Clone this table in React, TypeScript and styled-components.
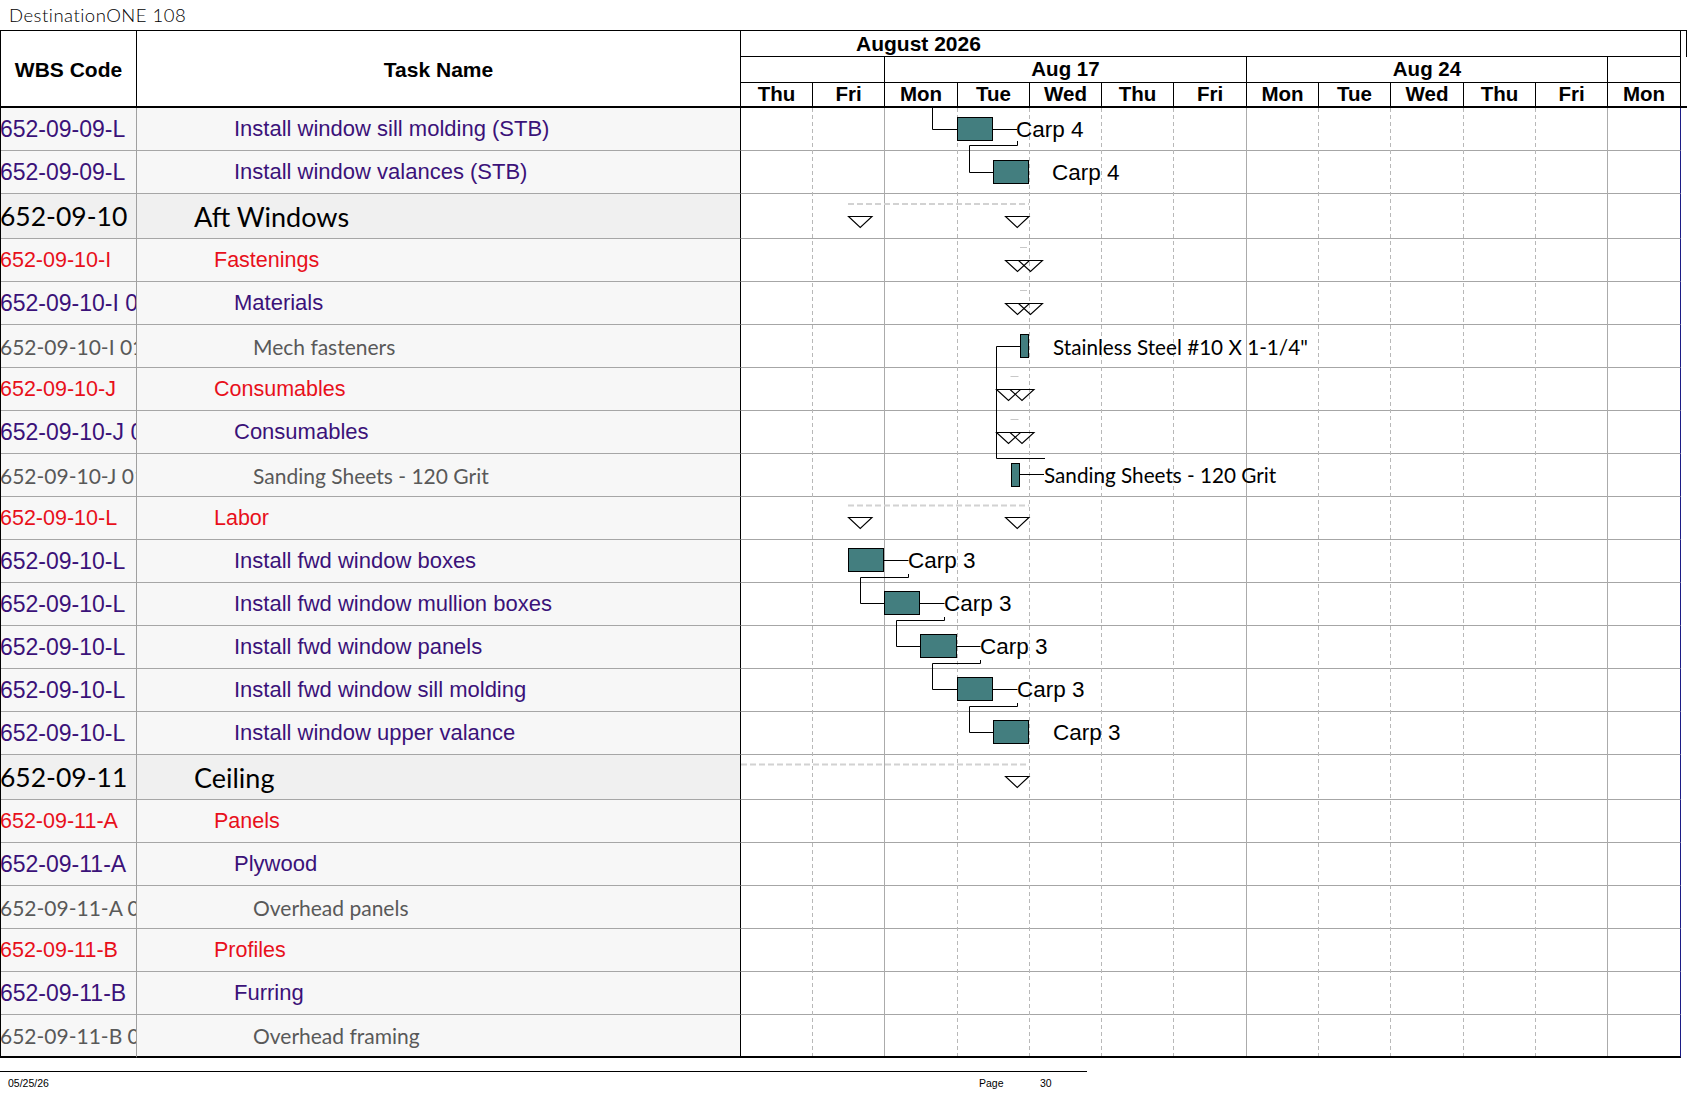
import React from 'react';
import styled, { createGlobalStyle, css } from 'styled-components';

const GlobalStyle = createGlobalStyle`
  *, *::before, *::after { box-sizing: border-box; }
  html, body { margin: 0; padding: 0; background: #fff; }
  body { font-family: 'Liberation Sans', Arial, sans-serif; }
`;

type Level = 1 | 2 | 3 | 4;
type Row = { wbs: string; name: string; level: Level };

const COLS = '136px 604px 940px 6px';
const DAY_WIDTHS = [72, 72, 73, 72, 72, 72, 73, 72, 72, 73, 72, 72, 73];
const DAYS = ['Thu', 'Fri', 'Mon', 'Tue', 'Wed', 'Thu', 'Fri', 'Mon', 'Tue', 'Wed', 'Thu', 'Fri', 'Mon'];
const WEEKS = [
  { label: '', span: 2 },
  { label: 'Aug 17', span: 5 },
  { label: 'Aug 24', span: 5 },
  { label: '', span: 1 },
];

const ROWS: Row[] = [
  { wbs: '652-09-09-L', name: 'Install window sill molding (STB)', level: 3 },
  { wbs: '652-09-09-L', name: 'Install window valances (STB)', level: 3 },
  { wbs: '652-09-10', name: 'Aft Windows', level: 1 },
  { wbs: '652-09-10-I', name: 'Fastenings', level: 2 },
  { wbs: '652-09-10-I 01', name: 'Materials', level: 3 },
  { wbs: '652-09-10-I 01 01', name: 'Mech fasteners', level: 4 },
  { wbs: '652-09-10-J', name: 'Consumables', level: 2 },
  { wbs: '652-09-10-J 01', name: 'Consumables', level: 3 },
  { wbs: '652-09-10-J 01 01', name: 'Sanding Sheets - 120 Grit', level: 4 },
  { wbs: '652-09-10-L', name: 'Labor', level: 2 },
  { wbs: '652-09-10-L', name: 'Install fwd window boxes', level: 3 },
  { wbs: '652-09-10-L', name: 'Install fwd window mullion boxes', level: 3 },
  { wbs: '652-09-10-L', name: 'Install fwd window panels', level: 3 },
  { wbs: '652-09-10-L', name: 'Install fwd window sill molding', level: 3 },
  { wbs: '652-09-10-L', name: 'Install window upper valance', level: 3 },
  { wbs: '652-09-11', name: 'Ceiling', level: 1 },
  { wbs: '652-09-11-A', name: 'Panels', level: 2 },
  { wbs: '652-09-11-A', name: 'Plywood', level: 3 },
  { wbs: '652-09-11-A 01', name: 'Overhead panels', level: 4 },
  { wbs: '652-09-11-B', name: 'Profiles', level: 2 },
  { wbs: '652-09-11-B', name: 'Furring', level: 3 },
  { wbs: '652-09-11-B 01', name: 'Overhead framing', level: 4 },
];

const levelFont: Record<Level, ReturnType<typeof css>> = {
  1: css`font-family: Lato, 'Liberation Sans', sans-serif; font-size: 27px; color: #000;`,
  2: css`font-family: 'Liberation Sans', Arial, sans-serif; font-size: 21.5px; color: #e8101b;`,
  3: css`font-family: 'Liberation Sans', Arial, sans-serif; font-size: 22px; color: #3b1279;`,
  4: css`font-family: Lato, 'Liberation Sans', sans-serif; font-size: 21px; color: #595959;`,
};
const INDENT: Record<Level, number> = { 1: 57, 2: 77, 3: 97, 4: 116 };

const Page = styled.div`
  width: 1687px;
`;

const Title = styled.div`
  height: 30px;
  padding-left: 9px;
  display: flex;
  align-items: center;
  font-family: Lato, 'Liberation Sans', sans-serif;
  font-weight: 300;
  font-size: 18.5px;
  letter-spacing: 0.5px;
  color: #000;
`;

const Sheet = styled.div`
  width: 1687px;
  border-top: 1px solid #000;
  border-left: 1px solid #000;
`;

const Header = styled.div`
  display: grid;
  grid-template-columns: ${COLS};
  height: 77px;
  border-bottom: 2px solid #000;
`;

const HeadCell = styled.div`
  display: flex;
  align-items: center;
  justify-content: center;
  padding-top: 3px;
  border-right: 1px solid #000;
  font-weight: bold;
  font-size: 21px;
  color: #000;
`;

const ChartHead = styled.div`
  display: grid;
  grid-template-rows: 26px 26px 23px;
`;

const MonthCell = styled.div`
  display: flex;
  align-items: center;
  padding-left: 115px;
  border-bottom: 1px solid #000;
  border-right: 1px solid #000;
  font-weight: bold;
  font-size: 21px;
`;

const ScaleRow = styled.div<{ $line?: boolean }>`
  display: grid;
  grid-template-columns: ${DAY_WIDTHS.map(w => `${w}px`).join(' ')};
  ${p => p.$line && 'border-bottom: 1px solid #000;'}
`;

const ScaleCell = styled.div<{ $span: number }>`
  grid-column: span ${p => p.$span};
  display: flex;
  align-items: center;
  justify-content: center;
  border-right: 1px solid #000;
  font-weight: bold;
  font-size: 20.5px;
  line-height: 1;
`;

const FillerHead = styled.div`
  display: flex;
  flex-direction: column;
  &::before {
    content: '';
    height: 26px;
    border-right: 1px solid #000;
  }
`;

const Body = styled.div`
  position: relative;
`;

const TableRow = styled.div<{ $h: number }>`
  display: grid;
  grid-template-columns: ${COLS};
  height: ${p => p.$h}px;
`;

const rowLine = css<{ $last?: boolean }>`
  border-bottom: ${p => (p.$last ? '2px solid #000' : '1px solid #a6a6a6')};
`;

const WbsCell = styled.div<{ $level: Level; $last?: boolean }>`
  display: flex;
  align-items: center;
  overflow: hidden;
  white-space: nowrap;
  border-right: 1px solid #a0a0a0;
  background: ${p => (p.$level === 1 ? '#f0f0f0' : '#f7f7f7')};
  ${p => levelFont[p.$level]}
  ${p => p.$level === 3 && 'font-size: 23px;'}
  ${p => p.$level === 1 && 'font-size: 26.5px;'}
  ${rowLine}
  span { margin-left: -1px; }
`;

const TaskCell = styled.div<{ $level: Level; $last?: boolean }>`
  display: flex;
  align-items: center;
  overflow: hidden;
  white-space: nowrap;
  padding-left: ${p => INDENT[p.$level]}px;
  border-right: 1px solid #000;
  background: ${p => (p.$level === 1 ? '#f0f0f0' : '#f7f7f7')};
  ${p => levelFont[p.$level]}
  ${rowLine}
`;

const ChartCell = styled.div<{ $last?: boolean }>`
  background: #fff;
  border-right: 1px solid #1c1c86;
  ${rowLine}
`;

const Drawing = styled.svg`
  position: absolute;
  top: 0;
  left: 740px;
  width: 940px;
  height: 950px;
  pointer-events: none;
`;

const Bar = styled.rect`
  fill: #437e7f;
  stroke: #000;
  stroke-width: 1;
`;

const Link = styled.path`
  fill: none;
  stroke: #000;
  stroke-width: 1;
`;

const Milestone = styled.polygon`
  fill: none;
  stroke: #000;
  stroke-width: 1.1;
`;

const SummaryLine = styled.line`
  stroke: #d2d2d2;
  stroke-width: 2;
  stroke-dasharray: 6 3;
`;

const Tick = styled.line`
  stroke: #c8c8c8;
  stroke-width: 1;
`;

const GridLine = styled.line<{ $solid: boolean }>`
  stroke: ${p => (p.$solid ? '#ababab' : '#b8b8b8')};
  stroke-width: 1;
  stroke-dasharray: ${p => (p.$solid ? 'none' : '4 3')};
`;

const ResLabel = styled.text`
  font-family: 'Liberation Sans', Arial, sans-serif;
  font-size: 22.5px;
  fill: #000;
`;

const NoteLabel = styled.text`
  font-family: Lato, 'Liberation Sans', sans-serif;
  font-size: 20.7px;
  fill: #000;
`;

const FooterRule = styled.div`
  width: 1087px;
  margin-top: 13px;
  border-top: 1px solid #000;
`;

const FooterRow = styled.div`
  display: grid;
  grid-template-columns: 971px 61px auto;
  padding: 5px 0 0 8px;
  font-family: 'Liberation Sans', Arial, sans-serif;
  font-size: 10.5px;
  line-height: 13px;
  color: #000;
`;

const BARS = [
  { x: 957.5, y: 117.5, w: 35 },
  { x: 993.5, y: 160.5, w: 35 },
  { x: 1020.5, y: 334.5, w: 8 },
  { x: 1011.5, y: 463.5, w: 8 },
  { x: 848.5, y: 548.5, w: 35 },
  { x: 884.5, y: 591.5, w: 35 },
  { x: 920.5, y: 634.5, w: 36 },
  { x: 957.5, y: 677.5, w: 35 },
  { x: 993.5, y: 720.5, w: 35 },
];

const LINKS = [
  'M932.5 108 V129.5 H957.5',
  'M992.5 129.5 H1017',
  'M1017.5 141 V145.5 H969.5 V172.5 H993.5',
  'M996.5 346.5 H1020.5',
  'M996.5 346.5 V458.5 H1045',
  'M1019.5 474.5 H1044',
  'M883.5 560.5 H908.5',
  'M908.5 574 V577.5 H860.5 V603.5 H884.5',
  'M919.5 603.5 H944.5',
  'M944.5 617 V620.5 H896.5 V646.5 H920.5',
  'M956.5 646.5 H980.5',
  'M980.5 660 V663.5 H932.5 V689.5 H957.5',
  'M992.5 689.5 H1017.5',
  'M1017.5 703 V706.5 H969.5 V732.5 H993.5',
];

const RES_LABELS = [
  { x: 1016, y: 129.5, t: 'Carp 4' },
  { x: 1052, y: 172, t: 'Carp 4' },
  { x: 908, y: 560.5, t: 'Carp 3' },
  { x: 944, y: 603.5, t: 'Carp 3' },
  { x: 980, y: 646.5, t: 'Carp 3' },
  { x: 1017, y: 689.5, t: 'Carp 3' },
  { x: 1053, y: 732, t: 'Carp 3' },
];

const NOTE_LABELS = [
  { x: 1053, y: 346.5, t: 'Stainless Steel #10 X 1-1/4"' },
  { x: 1044, y: 474.5, t: 'Sanding Sheets - 120 Grit' },
];

const SUMMARIES = [
  { x1: 848, x2: 1029, y: 204 },
  { x1: 848, x2: 1029, y: 505.5 },
  { x1: 741, x2: 1029, y: 764.5 },
];

// [left, right, top, apex]
const MILESTONES: [number, number, number, number][] = [
  [848.5, 872, 216.5, 227.5],
  [1005.5, 1029, 216.5, 227.5],
  [1005.5, 1029.5, 260.5, 271.5],
  [1018.5, 1042.5, 260.5, 271.5],
  [1005.5, 1029.5, 303.5, 314.5],
  [1018.5, 1042.5, 303.5, 314.5],
  [996.5, 1020.5, 389.5, 400.5],
  [1010, 1034, 389.5, 400.5],
  [996.5, 1020.5, 432.5, 443.5],
  [1010, 1034, 432.5, 443.5],
  [848.5, 872, 517.5, 528.5],
  [1005.5, 1029, 517.5, 528.5],
  [1005.5, 1029, 776.5, 787.5],
];

const TICKS = [
  [1020, 1027, 247.5],
  [1020, 1027, 290.5],
  [1010.5, 1018.5, 376.5],
  [1010.5, 1018.5, 419.5],
];

const gridLines = () => {
  const out: { x: number; solid: boolean }[] = [];
  let edge = 741;
  DAY_WIDTHS.slice(0, -1).forEach((w, i) => {
    edge += w;
    out.push({ x: edge - 0.5, solid: DAYS[i + 1] === 'Mon' });
  });
  return out;
};

const GanttDrawing = () => (
  <Drawing viewBox='741 108 940 950'>
    {gridLines().map(g => (
      <GridLine key={g.x} $solid={g.solid} x1={g.x} x2={g.x} y1={108} y2={1056} />
    ))}
    {SUMMARIES.map(s => (
      <SummaryLine key={s.y} x1={s.x1} x2={s.x2} y1={s.y} y2={s.y} />
    ))}
    {TICKS.map(([x1, x2, y]) => (
      <Tick key={y} x1={x1} x2={x2} y1={y} y2={y} />
    ))}
    {MILESTONES.map(([l, r, t, a], i) => (
      <Milestone key={i} points={`${l},${t} ${r},${t} ${(l + r) / 2},${a}`} />
    ))}
    {LINKS.map(d => (
      <Link key={d} d={d} />
    ))}
    {BARS.map(b => (
      <Bar key={`${b.x}-${b.y}`} x={b.x} y={b.y} width={b.w} height={23} />
    ))}
    {RES_LABELS.map(l => (
      <ResLabel key={`${l.x}-${l.y}`} x={l.x} y={l.y} dominantBaseline='central'>
        {l.t}
      </ResLabel>
    ))}
    {NOTE_LABELS.map(l => (
      <NoteLabel key={l.t} x={l.x} y={l.y} dominantBaseline='central'>
        {l.t}
      </NoteLabel>
    ))}
  </Drawing>
);

export default function App() {
  return (
    <Page>
      <GlobalStyle />
      <Title>DestinationONE 108</Title>
      <Sheet>
        <Header>
          <HeadCell>WBS Code</HeadCell>
          <HeadCell>Task Name</HeadCell>
          <ChartHead>
            <MonthCell>August 2026</MonthCell>
            <ScaleRow $line>
              {WEEKS.map((w, i) => (
                <ScaleCell key={i} $span={w.span}>
                  {w.label}
                </ScaleCell>
              ))}
            </ScaleRow>
            <ScaleRow>
              {DAYS.map((d, i) => (
                <ScaleCell key={i} $span={1}>
                  {d}
                </ScaleCell>
              ))}
            </ScaleRow>
          </ChartHead>
          <FillerHead />
        </Header>
        <Body>
          {ROWS.map((r, i) => {
            const last = i === ROWS.length - 1;
            return (
              <TableRow key={i} $h={r.level === 1 ? 45 : 43}>
                <WbsCell $level={r.level} $last={last}>
                  <span>{r.wbs}</span>
                </WbsCell>
                <TaskCell $level={r.level} $last={last}>
                  {r.name}
                </TaskCell>
                <ChartCell $last={last} />
                <div />
              </TableRow>
            );
          })}
          <GanttDrawing />
        </Body>
      </Sheet>
      <FooterRule />
      <FooterRow>
        <span>05/25/26</span>
        <span>Page</span>
        <span>30</span>
      </FooterRow>
    </Page>
  );
}
